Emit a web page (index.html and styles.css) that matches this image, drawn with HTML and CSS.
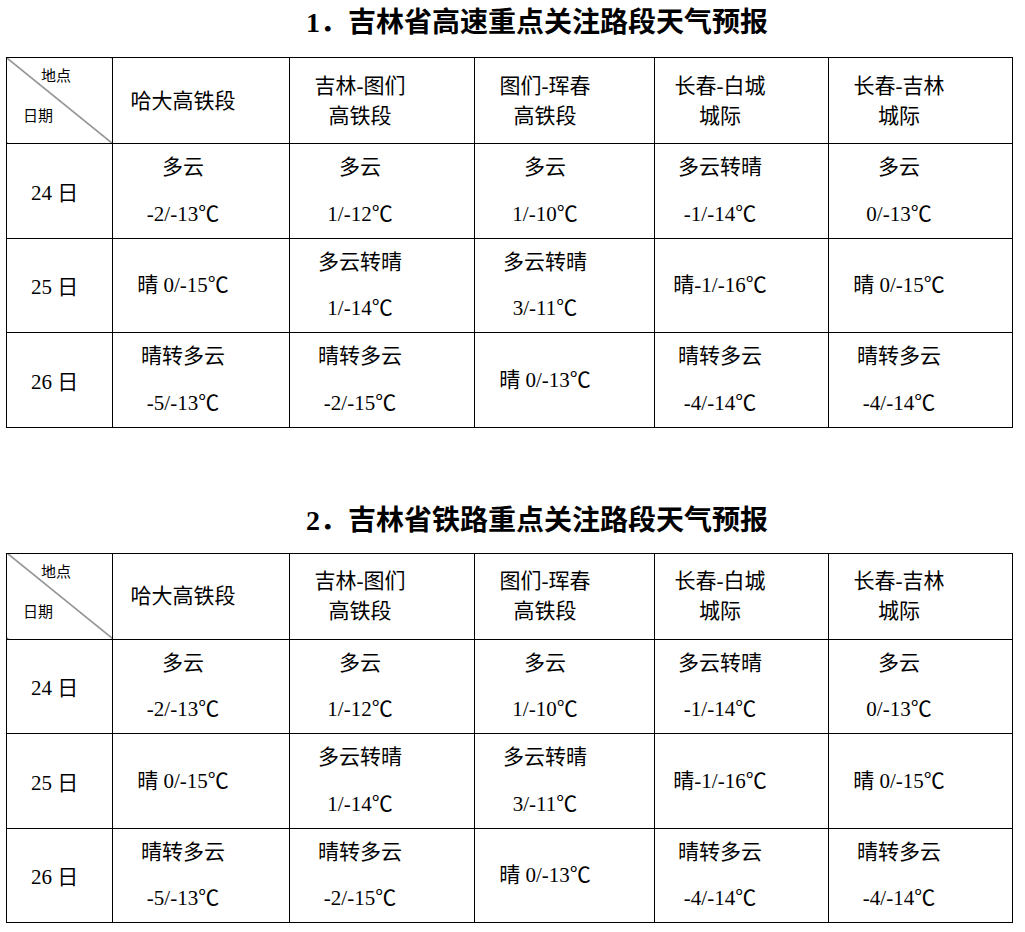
FILE: index.html
```html
<!DOCTYPE html>
<html lang="zh-CN">
<head>
<meta charset="utf-8">
<title>吉林省重点关注路段天气预报</title>
<link rel="stylesheet" href="styles.css">
</head>
<body>
<section class="sec sec1">
  <h2 class="title">1．吉林省高速重点关注路段天气预报</h2>
  <table class="fc">
    <colgroup><col class="k0"><col class="k1"><col class="k2"><col class="k3"><col class="k4"><col class="k5"></colgroup>
    <tr class="h">
      <td class="corner"><div class="cw"><span class="place">地点</span><span class="date">日期</span></div></td>
      <td><div class="v hv">哈大高铁段</div></td>
      <td><div class="v hv">吉林-图们<br>高铁段</div></td>
      <td><div class="v hv">图们-珲春<br>高铁段</div></td>
      <td class="c4"><div class="v hv">长春-白城<br>城际</div></td>
      <td><div class="v hv">长春-吉林<br>城际</div></td>
    </tr>
    <tr class="d">
      <td class="day">24 日</td>
      <td><div class="v">多云<br>-2/-13℃</div></td>
      <td><div class="v">多云<br>1/-12℃</div></td>
      <td><div class="v">多云<br>1/-10℃</div></td>
      <td class="c4"><div class="v">多云转晴<br>-1/-14℃</div></td>
      <td><div class="v">多云<br>0/-13℃</div></td>
    </tr>
    <tr class="d">
      <td class="day">25 日</td>
      <td><div class="v">晴 0/-15℃</div></td>
      <td><div class="v">多云转晴<br>1/-14℃</div></td>
      <td><div class="v">多云转晴<br>3/-11℃</div></td>
      <td class="c4"><div class="v">晴-1/-16℃</div></td>
      <td><div class="v">晴 0/-15℃</div></td>
    </tr>
    <tr class="d">
      <td class="day">26 日</td>
      <td><div class="v">晴转多云<br>-5/-13℃</div></td>
      <td><div class="v">晴转多云<br>-2/-15℃</div></td>
      <td><div class="v">晴 0/-13℃</div></td>
      <td class="c4"><div class="v">晴转多云<br>-4/-14℃</div></td>
      <td><div class="v">晴转多云<br>-4/-14℃</div></td>
    </tr>
  </table>
</section>
<section class="sec sec2">
  <h2 class="title">2．吉林省铁路重点关注路段天气预报</h2>
  <table class="fc">
    <colgroup><col class="k0"><col class="k1"><col class="k2"><col class="k3"><col class="k4"><col class="k5"></colgroup>
    <tr class="h">
      <td class="corner"><div class="cw"><span class="place">地点</span><span class="date">日期</span></div></td>
      <td><div class="v hv">哈大高铁段</div></td>
      <td><div class="v hv">吉林-图们<br>高铁段</div></td>
      <td><div class="v hv">图们-珲春<br>高铁段</div></td>
      <td class="c4"><div class="v hv">长春-白城<br>城际</div></td>
      <td><div class="v hv">长春-吉林<br>城际</div></td>
    </tr>
    <tr class="d">
      <td class="day">24 日</td>
      <td><div class="v">多云<br>-2/-13℃</div></td>
      <td><div class="v">多云<br>1/-12℃</div></td>
      <td><div class="v">多云<br>1/-10℃</div></td>
      <td class="c4"><div class="v">多云转晴<br>-1/-14℃</div></td>
      <td><div class="v">多云<br>0/-13℃</div></td>
    </tr>
    <tr class="d">
      <td class="day">25 日</td>
      <td><div class="v">晴 0/-15℃</div></td>
      <td><div class="v">多云转晴<br>1/-14℃</div></td>
      <td><div class="v">多云转晴<br>3/-11℃</div></td>
      <td class="c4"><div class="v">晴-1/-16℃</div></td>
      <td><div class="v">晴 0/-15℃</div></td>
    </tr>
    <tr class="d">
      <td class="day">26 日</td>
      <td><div class="v">晴转多云<br>-5/-13℃</div></td>
      <td><div class="v">晴转多云<br>-2/-15℃</div></td>
      <td><div class="v">晴 0/-13℃</div></td>
      <td class="c4"><div class="v">晴转多云<br>-4/-14℃</div></td>
      <td><div class="v">晴转多云<br>-4/-14℃</div></td>
    </tr>
  </table>
</section>
</body>
</html>
```

FILE: styles.css
```css
* { box-sizing: border-box; }
html, body { background: #fff; }
body {
  margin: 0;
  padding: 1px 0 0 6px;
  color: #000;
  font-family: "Liberation Serif", "Noto Sans CJK SC", serif;
}
.title {
  margin: 0;
  padding-left: 55px;
  text-align: center;
  font-size: 28px;
  font-weight: bold;
  line-height: 44px;
  width: 1007px;
}
.sec1 .title { margin-bottom: 12px; }
.sec2 { margin-top: 71px; }
.sec2 .title { margin-bottom: 10px; }

.fc {
  border-collapse: collapse;
  table-layout: fixed;
  width: 1007px;
  font-size: 21px;
}
.fc td {
  border: 1px solid #000;
  padding: 0;
  vertical-align: middle;
}
.k0 { width: 106px; }
.k1 { width: 177px; }
.k2 { width: 185px; }
.k3 { width: 180px; }
.k4 { width: 174px; }
.k5 { width: 184px; }

.h { height: 86px; }
.d { height: 94.5px; }

.v {
  width: 140px;
  text-align: center;
  line-height: 46.5px;
  white-space: nowrap;
}
.v.hv { line-height: 30px; }
.c4 .v { width: 130px; }

.day {
  text-align: center;
  padding-right: 10px !important;
}

.corner {
  background: linear-gradient(to top right, transparent calc(50% - 0.7px), #000 50%, transparent calc(50% + 0.7px));
}
.cw {
  display: flex;
  flex-direction: column;
  padding-top: 8px;
  height: 85px;
  font-size: 15px;
  line-height: 20px;
  gap: 20px;
}
.place { padding-left: 34px; }
.date { padding-left: 16px; }
```
